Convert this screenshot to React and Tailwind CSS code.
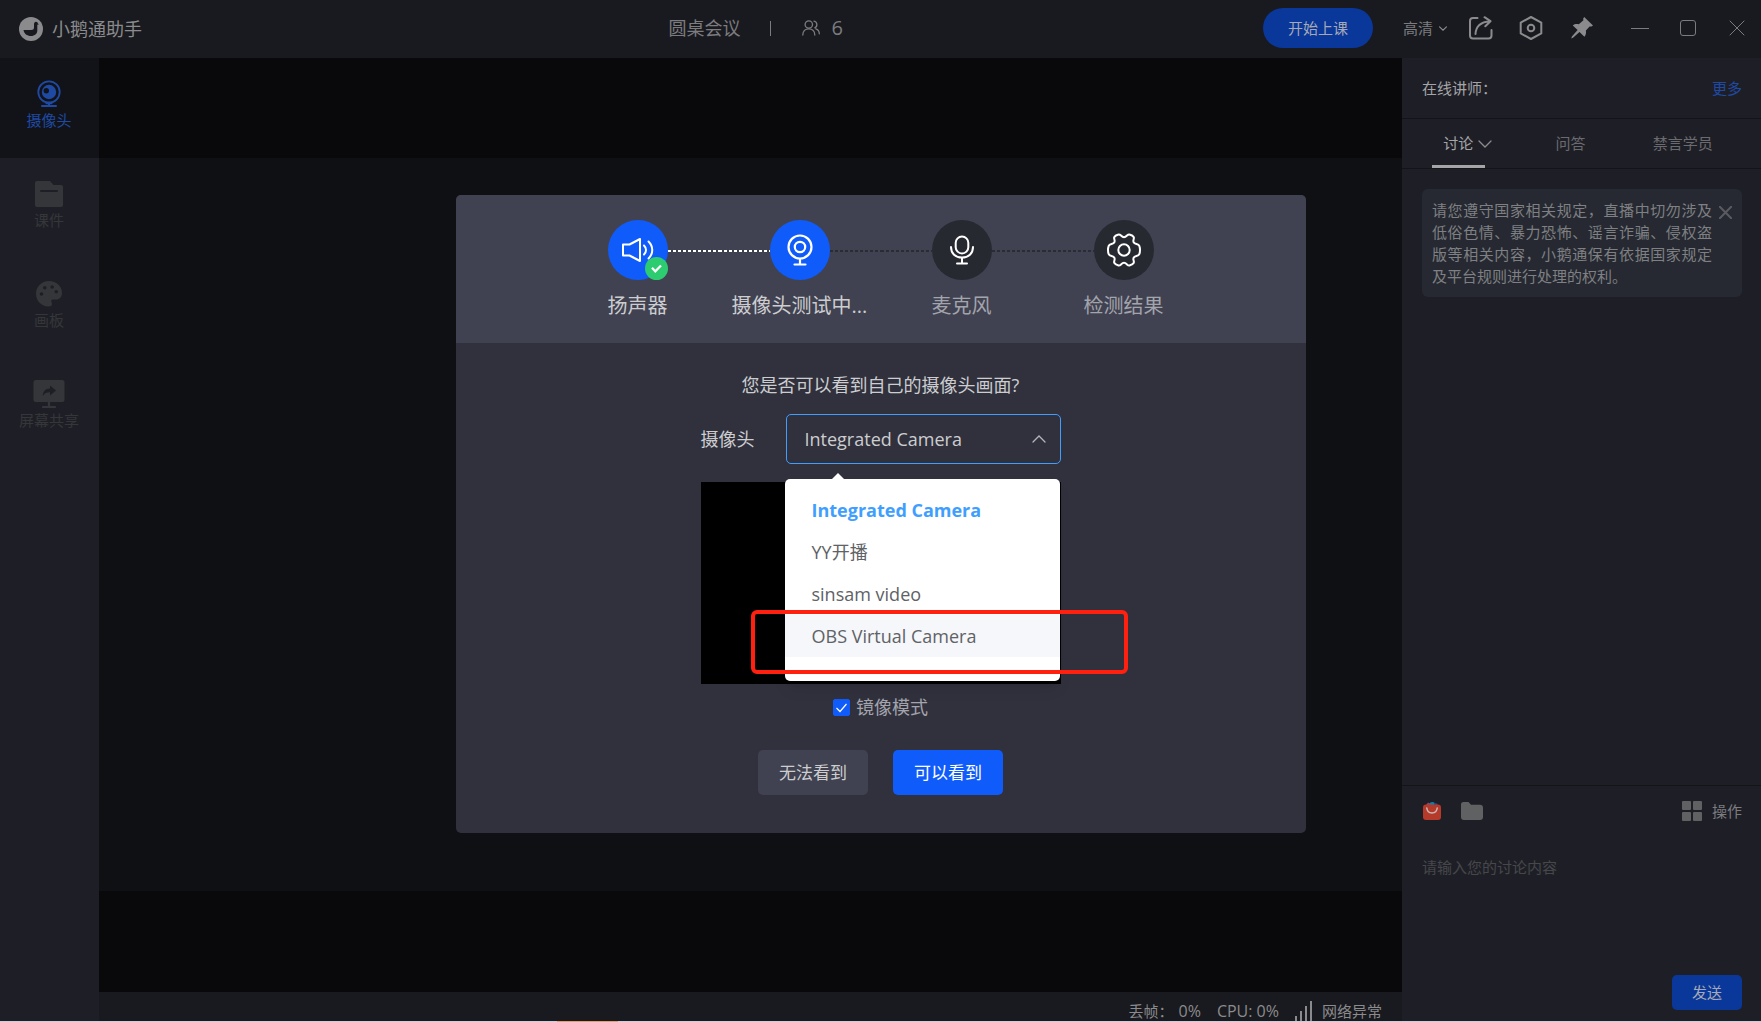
import { useState } from "react";

const cameras = ["Integrated Camera", "YY开播", "sinsam video", "OBS Virtual Camera"];

// ---- Ícones ----
const LogoIcon = () => (
  <svg width="24" height="24" viewBox="0 0 24 24">
    <circle cx="12" cy="12" r="12" fill="#8b8b8d" />
    <path d="M4.500 13h7.500c2.200 0 3-.8 3-2.500V7.200c0-1.500.8-2.400 2-2.400s1.700.8 1.800 1.700l1.200.8-1.700.4v5.800c0 3.200-2.600 5.500-6.300 5.500-4 0-7-2.200-7.500-6z" fill="#191a1f" />
  </svg>
);

const CameraSideIcon = () => (
  <svg width="24" height="28" viewBox="0 0 24 28" fill="none">
    <circle cx="12" cy="12" r="10.700" stroke="#1f4aa3" strokeWidth="1.800" />
    <circle cx="12" cy="12" r="7.200" fill="#1f4aa3" />
    <circle cx="9.300" cy="10.800" r="2.700" fill="#121318" />
    <path d="M12 22.500v3M5 26h14M9.500 23.300h5" stroke="#1f4aa3" strokeWidth="2" strokeLinecap="round" />
  </svg>
);

const CoursewareIcon = () => (
  <svg width="28" height="26" viewBox="0 0 28 26">
    <path d="M2 0h13l3.500 4H26a2 2 0 0 1 2 2v18a2 2 0 0 1-2 2H2a2 2 0 0 1-2-2V2a2 2 0 0 1 2-2z" fill="#35363a" />
    <path d="M6 10h16" stroke="#1e1f26" strokeWidth="2" strokeLinecap="round" />
  </svg>
);

const PaletteIcon = () => (
  <svg width="26" height="26" viewBox="0 0 26 26">
    <path d="M13 0C5.800 0 0 5.600 0 12.800 0 20 5.500 25.500 12.500 25.500c2 0 3.500-.8 3.500-2.500 0-1.500-.8-1.700-.8-3 0-1 .9-1.500 2-1.500H20c3.600 0 6-2.700 6-6.500C26 5 20.200 0 13 0z" fill="#35363a" />
    <circle cx="5.500" cy="13" r="1.800" fill="#1e1f26" />
    <circle cx="8.800" cy="6.800" r="1.800" fill="#1e1f26" />
    <circle cx="16.200" cy="6" r="1.800" fill="#1e1f26" />
    <circle cx="20.300" cy="10.800" r="1.800" fill="#1e1f26" />
  </svg>
);

const ScreenIcon = () => (
  <svg width="32" height="28" viewBox="0 0 32 28">
    <rect x="0.500" width="31" height="22" rx="2.500" fill="#35363a" />
    <path d="M16 22v5M10 27h12" stroke="#35363a" strokeWidth="2.200" strokeLinecap="round" />
    <path d="M17 5.500l6 5-6 5v-3.200c-3.500 0-5.500 1-7.300 3.700.3-4.500 2.300-7.300 7.300-7.500z" fill="#1e1f26" />
  </svg>
);

const UsersIcon = () => (
  <svg width="18" height="16" viewBox="0 0 18 16" fill="none" stroke="#7c7c7f" strokeWidth="1.300" strokeLinecap="round">
    <circle cx="6.800" cy="4.500" r="3.700" />
    <path d="M.8 15c0-4 2.400-6.200 6-6.200s6 2.200 6 6.200M12 1.200c3.500.5 3.800 5.500.8 6.600M13.800 8.800c2.200.7 3.500 2.500 3.500 5" />
  </svg>
);

const ShareIcon = () => (
  <svg width="24" height="24" viewBox="0 0 24 24" fill="none" stroke="#8b8b8d" strokeWidth="2" strokeLinecap="round" strokeLinejoin="round">
    <path d="M8.500 2H4a3 3 0 0 0-3 3v14.500a3 3 0 0 0 3 3h15.500a3 3 0 0 0 3-3V14" />
    <path d="M6.500 18C6.800 11 10.500 6 21 5.200M15.500 1.200l6 4-5.200 5" />
  </svg>
);

const HexIcon = () => (
  <svg width="24" height="24" viewBox="0 0 24 24" fill="none" stroke="#8b8b8d" strokeWidth="2" strokeLinejoin="round">
    <path d="M12 1l10.300 5.600v10.800L12 23 1.700 17.400V6.600z" />
    <circle cx="12" cy="12" r="3.300" />
  </svg>
);

const PinIcon = () => (
  <svg width="22" height="22" viewBox="0 0 22 22">
    <path d="M13.200 0L22 8.600l-1.600 1-1.800-.2-3.700 4.200c.4 2.600-.1 4.600-1.500 6.100L8.500 14.900 2 20.800l-1.800.6.700-1.900 5.700-6.400-4.800-4.700c1.600-1.300 3.600-1.700 6-1.200l4.600-3.900-.2-1.800z" fill="#8b8b8d" />
  </svg>
);

const Chevron = ({ w, h, color, up, stroke = 1.3 }) => (
  <svg width={w} height={h} viewBox="0 0 14 8" fill="none" stroke={color} strokeWidth={stroke} strokeLinecap="round">
    <path d={up ? "M1 7l6-6 6 6" : "M1 1l6 6 6-6"} />
  </svg>
);

const CloseIcon = ({ size, color, stroke }) => (
  <svg width={size} height={size} viewBox="0 0 16 16" fill="none" stroke={color} strokeWidth={stroke} strokeLinecap="round">
    <path d="M1 1l14 14M15 1L1 15" />
  </svg>
);

const SpeakerIcon = () => (
  <svg width="32" height="24" viewBox="0 0 32 24" fill="none" stroke="#fff" strokeWidth="2" strokeLinecap="round" strokeLinejoin="round">
    <path d="M1 6.500h6.500L18 1v22L7.500 17.500H1z" />
    <path d="M22 7.500c2.700 2.700 2.700 6.300 0 9M26.500 3.500c5 5 5 12 0 17" />
  </svg>
);

const WebcamIcon = () => (
  <svg width="26" height="32" viewBox="0 0 26 32" fill="none" stroke="#fff" strokeWidth="2.200" strokeLinecap="round">
    <circle cx="13" cy="13" r="11.500" />
    <circle cx="13" cy="13" r="5.200" />
    <path d="M13 25v5M7.500 30.500h11" />
  </svg>
);

const MicIcon = () => (
  <svg width="24" height="30" viewBox="0 0 24 30" fill="none" stroke="#fff" strokeWidth="2" strokeLinecap="round">
    <rect x="5.700" y="1.500" width="12.600" height="17" rx="6.300" />
    <path d="M1 12c0 6.500 4.500 10.500 11 10.500S23 18.500 23 12M12 23v5.500M7 28.500h10" />
  </svg>
);

const GearIcon = () => (
  <svg width="34" height="34" viewBox="0 0 34 34" fill="none" stroke="#fff" strokeWidth="2" strokeLinejoin="round">
    <path d="M11.500 1.500c2-.7 2.800 2.700 5.500 2.700s3.500-3.400 5.500-2.700c1.700.5 3.700 1.500 4.300 2.700.7 1.700-1.300 3-.2 5 1.200 2.200 4.700 1.300 5.700 3.600.5 1.200.7 2.900.7 4.200s-.2 3-.7 4.200c-1 2.300-4.500 1.400-5.700 3.600-1.100 2 .9 3.300.2 5-.6 1.200-2.600 2.200-4.300 2.700-2 .7-2.800-2.700-5.500-2.700s-3.500 3.400-5.500 2.700c-1.700-.5-3.700-1.500-4.300-2.700-.7-1.700 1.300-3 .2-5C6.200 22.600 2.700 23.500 1.700 21.200 1.200 20 1 18.300 1 17s.2-3 .7-4.200c1-2.300 4.500-1.400 5.700-3.600 1.100-2-.9-3.300-.2-5 .6-1.200 2.600-2.200 4.300-2.700z" />
    <circle cx="17" cy="17" r="5.700" />
  </svg>
);

const BagIcon = () => (
  <svg width="18" height="18" viewBox="0 0 18 18" fill="none">
    <path d="M3 3l2-2.500 3 1.500L6 5z" fill="#a03a7a" />
    <path d="M6 3.500C6 1.300 7.300 0 9.300 0s3.400 1.300 3.400 3.500z" fill="#14809c" />
    <path d="M11 1l3 .5L15.500 4H11z" fill="#1c49a6" />
    <rect y="2.500" width="18" height="15.500" rx="3" fill="#b53a2a" />
    <path d="M3.800 6c.6 6.500 9.800 6.500 10.400 0" stroke="#c9b8b6" strokeWidth="1.500" strokeLinecap="round" />
  </svg>
);

const FolderIcon = () => (
  <svg width="22" height="18" viewBox="0 0 22 18">
    <path d="M2.500 0h5L10 2.800h9a3 3 0 0 1 3 3V15a3 3 0 0 1-3 3H3a3 3 0 0 1-3-3V2.500A2.500 2.500 0 0 1 2.500 0z" fill="#606163" />
  </svg>
);

const GridIcon = () => (
  <svg width="20" height="20" viewBox="0 0 20 20" fill="#606163">
    <rect width="9" height="9" rx="1" />
    <rect x="11" width="9" height="9" rx="1" />
    <rect y="11" width="9" height="9" rx="1" />
    <rect x="11" y="11" width="9" height="9" rx="1" />
  </svg>
);

const SignalIcon = () => (
  <svg width="17" height="20" viewBox="0 0 17 20" fill="#8b8b8d">
    <rect y="15" width="2" height="5" />
    <rect x="5" y="10" width="2" height="10" />
    <rect x="10" y="5" width="2" height="15" />
    <rect x="15" width="2" height="20" />
  </svg>
);

const sideItems = [
  { label: "摄像头", icon: <CameraSideIcon />, active: true },
  { label: "课件", icon: <CoursewareIcon /> },
  { label: "画板", icon: <PaletteIcon /> },
  { label: "屏幕共享", icon: <ScreenIcon /> },
];

const lineWhite = "bg-[repeating-linear-gradient(90deg,#fff_0_3px,transparent_3px_5px)]";
const lineDark = "bg-[repeating-linear-gradient(90deg,#2a2b34_0_3px,transparent_3px_5px)]";

const steps = [
  { label: "扬声器", icon: <SpeakerIcon />, on: true, done: true, left: "", right: lineWhite },
  { label: "摄像头测试中...", icon: <WebcamIcon />, on: true, left: lineWhite, right: lineDark },
  { label: "麦克风", icon: <MicIcon />, left: lineDark, right: lineDark },
  { label: "检测结果", icon: <GearIcon />, left: lineDark, right: "" },
];

function Header() {
  return (
    <header className="flex h-[58px] items-center bg-[#191a1f] pb-[2px] pl-[19px] pr-4 text-[#7c7c7f]">
      <div className="flex flex-1 items-center gap-[9px] pt-[2px]">
        <LogoIcon />
        <span className="text-[18px] text-[#8b8b8d]">小鹅通助手</span>
      </div>

      <div className="mr-[420px] flex items-center text-[18px]">
        <span>圆桌会议</span>
        <span className="ml-[29px] mr-[31px] h-[15px] w-px bg-[#7c7c7f]" />
        <UsersIcon />
        <span className="ml-3 text-[20px]">6</span>
      </div>

      <div className="flex items-center">
        <button className="h-10 w-[110px] rounded-full bg-[#0a379a] text-[15px] text-[#a5a9b5]">开始上课</button>
        <button className="ml-[30px] flex items-center gap-[6px] text-[15px]">
          高清
          <Chevron w={8} h={5} color="#8b8b8d" stroke={2} />
        </button>
        <button className="ml-[22px]" aria-label="分享"><ShareIcon /></button>
        <button className="ml-[26px]" aria-label="设置"><HexIcon /></button>
        <button className="ml-[28px]" aria-label="置顶"><PinIcon /></button>
        <button className="ml-[38px] flex h-5 w-[18px] items-center" aria-label="最小化">
          <span className="h-px w-full bg-[#7c7c7f]" />
        </button>
        <button className="ml-[31px] size-4 rounded-[3px] border border-[#7c7c7f]" aria-label="最大化" />
        <button className="ml-[33px]" aria-label="关闭"><CloseIcon size={16} color="#7c7c7f" stroke={1} /></button>
      </div>
    </header>
  );
}

function SidePanel() {
  return (
    <aside className="flex w-[359px] flex-none flex-col bg-[#1e1f26]">
      <div className="flex h-[61px] items-center justify-between border-b border-[#131418] pl-5 pr-[19px] text-[15px]">
        <span className="text-[#a5a5a8]">在线讲师：</span>
        <a href="#" className="text-[#1f4aa3]">更多</a>
      </div>

      <nav className="grid h-[50px] grid-cols-3 border-b border-[#131418] pr-[22px] text-[15px] text-[#6b6b6f]">
        <button className="flex justify-center text-[#a5a5a8]">
          <span className="flex h-full w-[53px] items-center justify-center border-b-[3px] border-[#a5a5a8] pt-[2px]">讨论</span>
          <span className="-ml-[10px] -mr-[13px] flex h-full w-[23px] items-center pl-[3px]">
            <Chevron w={14} h={8} color="#8b8b8d" />
          </span>
        </button>
        <button>问答</button>
        <button>禁言学员</button>
      </nav>

      <div className="flex-1 pl-5 pr-[19px] pt-5">
        <div className="flex items-start rounded-md bg-[#262931] p-[10px]">
          <p className="flex-1 text-justify text-[15px] leading-[22px] text-[#7f8083]">
            请您遵守国家相关规定，直播中切勿涉及低俗色情、暴力恐怖、谣言诈骗、侵权盗版等相关内容，小鹅通保有依据国家规定及平台规则进行处理的权利。
          </p>
          <button className="ml-[7px] mt-[7px]" aria-label="关闭提示"><CloseIcon size={13} color="#5a5b60" stroke={2.5} /></button>
        </div>
      </div>

      <div className="flex h-[236px] flex-col border-t border-[#131418] pb-[11px] pl-5 pr-[19px] pt-[15px]">
        <div className="flex h-5 items-center text-[15px] text-[#7c7c7f]">
          <button className="mr-5 pl-px" aria-label="商品"><BagIcon /></button>
          <button className="flex-1" aria-label="文件"><FolderIcon /></button>
          <button className="flex items-center gap-[10px]">
            <GridIcon />
            操作
          </button>
        </div>
        <textarea
          aria-label="讨论内容"
          placeholder="请输入您的讨论内容"
          className="mt-[35px] flex-1 resize-none bg-transparent text-[15px] leading-[22px] text-[#a5a5a8] outline-none placeholder:text-[#46474b]"
        />
        <button className="h-[35px] w-[70px] self-end rounded-[5px] bg-[#0a379a] text-[15px] text-[#a5a9b5]">发送</button>
      </div>
    </aside>
  );
}

function CameraSelect({ camera, setCamera }) {
  return (
    <div className="relative w-[275px]">
      <select
        id="camera"
        value={camera}
        onChange={(e) => setCamera(e.target.value)}
        className="h-[50px] w-full appearance-none rounded-[5px] border border-[#409eff] bg-transparent px-[18px] text-[18px] text-[#cdcdd0] outline-none"
      >
        {cameras.map((c) => (
          <option key={c}>{c}</option>
        ))}
      </select>
      <span className="pointer-events-none absolute right-[15px] top-[21px]">
        <Chevron w={14} h={8} color="#b4b5ba" up />
      </span>

      {/* Lista aberta */}
      <div className="absolute -left-px top-[65px] z-10 w-[275px] rounded-[5px] bg-white pb-[24px] pt-[10px] shadow-lg">
        <span className="absolute -top-[6px] left-[46px] border-x-[7px] border-b-[7px] border-x-transparent border-b-white" />
        <ul role="listbox" aria-label="摄像头">
          {cameras.map((c) => (
            <li
              key={c}
              role="option"
              aria-selected={c === camera}
              onClick={() => setCamera(c)}
              className={`h-[42px] px-[27px] text-[18px] leading-[42px] ${
                c === camera ? "font-bold text-[#409eff]" : "text-[#606266]"
              } ${c === "OBS Virtual Camera" ? "bg-[#f5f7fa]" : ""}`}
            >
              {c}
            </li>
          ))}
        </ul>
        <div className="pointer-events-none absolute -left-[34px] top-[131px] h-[64px] w-[377px] rounded-md border-4 border-[#ff2010]" />
      </div>
    </div>
  );
}

function DeviceCheck() {
  const [camera, setCamera] = useState("Integrated Camera");
  const [mirror, setMirror] = useState(true);

  return (
    <div className="fixed inset-0 flex items-center justify-center pt-[6px]">
      <div role="dialog" aria-label="设备检测" className="w-[850px] rounded-[5px] bg-[#30313d] text-[#cdcdd0]">
        <ol className="flex h-[148px] justify-center rounded-t-[5px] bg-[#404251] pt-[25px]">
          {steps.map((s) => (
            <li key={s.label} className="flex w-[162px] flex-col items-center">
              <div className="flex w-full items-center">
                <span className={`mt-[2px] h-[2px] flex-1 ${s.left}`} />
                <span
                  className={`relative flex size-[60px] items-center justify-center rounded-full ${
                    s.on ? "bg-[#105cfb]" : "bg-[#272931]"
                  }`}
                >
                  {s.icon}
                  {s.done && (
                    <span className="absolute bottom-0 right-0 flex size-[23px] items-center justify-center rounded-full bg-[#2ecc71]">
                      <svg width="11" height="9" viewBox="0 0 11 9" fill="none" stroke="#fff" strokeWidth="2.200">
                        <path d="M1 3.800l3.300 3.500L10 1.500" />
                      </svg>
                    </span>
                  )}
                </span>
                <span className={`mt-[2px] h-[2px] flex-1 ${s.right}`} />
              </div>
              <span className={`mt-3 text-[20px] leading-7 ${s.on ? "" : "text-[#a3a4ac]"}`}>{s.label}</span>
            </li>
          ))}
        </ol>

        <div className="flex flex-col items-center pb-[38px] pt-[30px]">
          <p className="text-[18px] leading-6">您是否可以看到自己的摄像头画面?</p>

          <div className="mt-[17px] flex w-[360px] items-center justify-between">
            <label htmlFor="camera" className="text-[18px]">摄像头</label>
            <CameraSelect camera={camera} setCamera={setCamera} />
          </div>

          <div className="mt-[18px] h-[202px] w-[360px] bg-black" />

          <label className="mt-[11px] flex items-center gap-[6px] text-[18px] leading-6 text-[#a3a4ac]">
            <span className="relative flex">
              <input
                type="checkbox"
                checked={mirror}
                onChange={(e) => setMirror(e.target.checked)}
                className="size-[17px] appearance-none rounded-[2px] border border-[#105cfb] checked:bg-[#105cfb]"
              />
              {mirror && (
                <svg className="pointer-events-none absolute inset-0" width="17" height="17" viewBox="0 0 17 17" fill="none" stroke="#fff" strokeWidth="1.200">
                  <path d="M3.500 9l3.500 3.500L13.500 5" />
                </svg>
              )}
            </span>
            镜像模式
          </label>

          <div className="mt-[31px] flex gap-[25px] text-[17px]">
            <button className="h-[45px] w-[110px] rounded-[5px] bg-[#404251]">无法看到</button>
            <button className="h-[45px] w-[110px] rounded-[5px] bg-[#105cfb] text-white">可以看到</button>
          </div>
        </div>
      </div>
    </div>
  );
}

export default function App() {
  return (
    <div className="flex h-screen flex-col overflow-hidden bg-[#191a1f] font-['Open_Sans','Noto_Sans_CJK_SC',sans-serif]">
      <Header />
      <div className="flex min-h-0 flex-1">
        <nav className="w-[99px] flex-none bg-[#1e1f26] ">
          {sideItems.map((item) => (
            <button
              key={item.label}
              className={`flex h-[100px] w-full flex-col items-center pr-px pt-[22px] text-[15px] leading-5 ${
                item.active ? "bg-[#121318] text-[#1f4aa3]" : "text-[#35363a]"
              }`}
            >
              <span className="flex h-7 items-center">{item.icon}</span>
              <span className="mt-[2px]">{item.label}</span>
            </button>
          ))}
        </nav>

        <main className="flex flex-1 flex-col">
          <div className="h-[100px] bg-[#09090b]" />
          <div className="flex-1 bg-[#0f1013]" />
          <div className="h-[101px] bg-[#09090b]" />
          <footer className="flex h-[29px] items-center justify-end pr-5 pt-2 text-[15px] leading-5 text-[#8b8b8d]">
            <span>丢帧：</span>
            <span className="ml-[5px] text-[16px]">0%</span>
            <span className="mx-4 text-[16px]">CPU: 0%</span>
            <SignalIcon />
            <span className="ml-[10px]">网络异常</span>
          </footer>
        </main>

        <SidePanel />
      </div>

      <div className="flex h-px flex-none bg-[#c8d0dc]">
        <span className="ml-[557px] w-[61px] bg-[#e0a070]" />
      </div>

      <DeviceCheck />
    </div>
  );
}
